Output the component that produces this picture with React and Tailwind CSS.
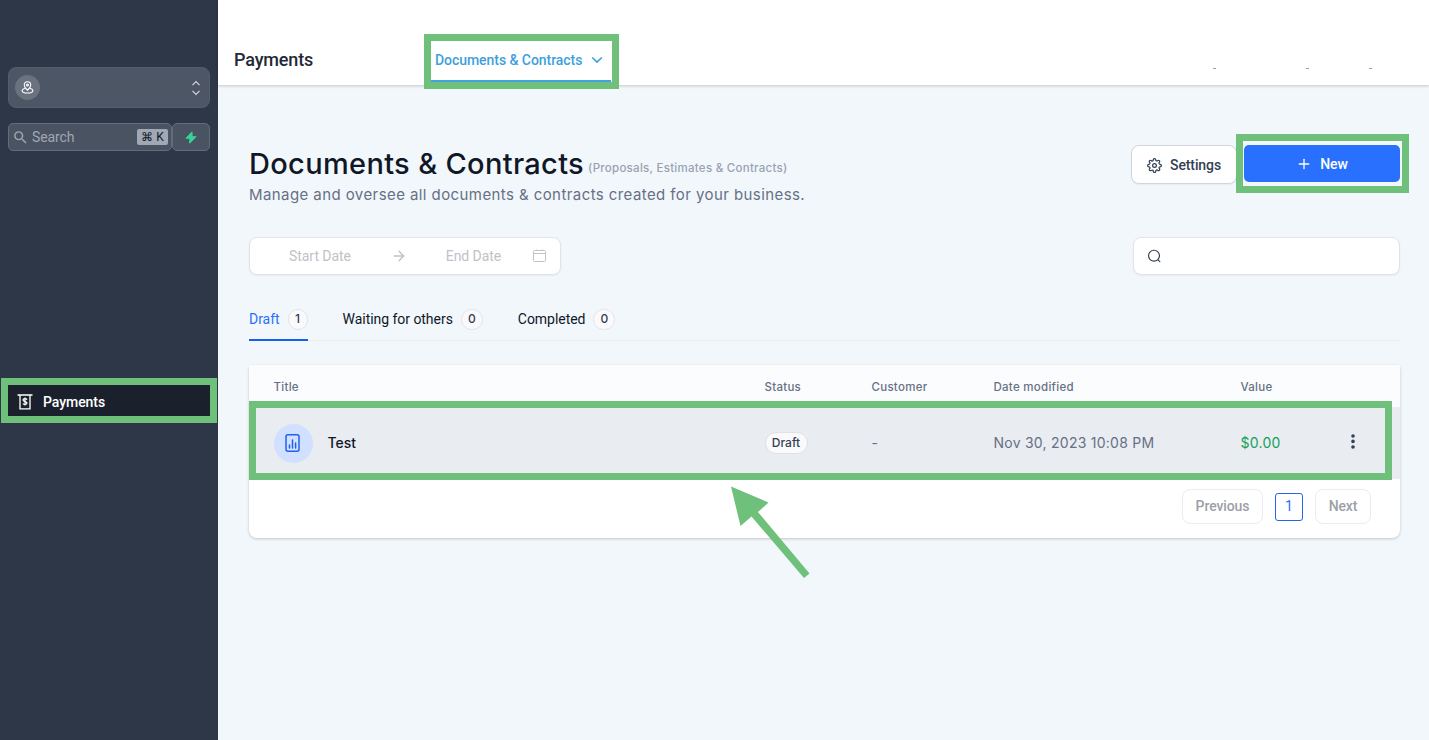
import React, { useState } from 'react';
import { MdSearch } from 'react-icons/md';
import { FiArrowRight, FiPlus, FiSettings } from 'react-icons/fi';

const tabs = [
    { label: 'Draft', count: 1, badge: 'w-[20px]' },
    { label: 'Waiting for others', count: 0, badge: 'w-[22px]' },
    { label: 'Completed', count: 0, badge: 'w-[22px]' },
];

const documents = [
    { title: 'Test', status: 'Draft', customer: '-', modified: 'Nov 30, 2023 10:08 PM', value: '$0.00' },
];

const columns = 'grid grid-cols-[491px_107px_122px_247px_1fr] items-center pl-[24.5px]';

const Highlight = ({ className }) => (
    <div className={`absolute pointer-events-none border-[#6fc07b] ${className}`} />
);

const LocationIcon = () => (
    <svg width="13" height="13" viewBox="0 0 24 24" fill="none" stroke="white" strokeWidth="2" strokeLinecap="round" strokeLinejoin="round">
        <path d="M12 17s6-4.6 6-9.5a6 6 0 0 0-12 0C6 12.400 12 17 12 17Z" />
        <circle cx="12" cy="7.500" r="1.800" />
        <path d="M6.500 14C3.600 14.700 2 16 2 17.800 2 20.300 6.500 22 12 22s10-1.700 10-4.200c0-1.800-1.600-3.100-4.500-3.800" />
    </svg>
);

const ReceiptIcon = () => (
    <svg width="16" height="16" viewBox="0 0 16 16" fill="none" stroke="white" strokeWidth="1.300">
        <path d="M.5 1h15M3 1v13.900h10V1" />
        <path d="M10 5.600C9.600 4.900 8.900 4.700 8 4.700c-1.200 0-2 .5-2 1.400 0 2 4 .9 4 3 0 .9-.8 1.400-2 1.400-.9 0-1.700-.3-2.100-1M8 3.600v8" strokeWidth="1.200" />
    </svg>
);

const ChartFileIcon = () => (
    <svg width="16" height="20" viewBox="0 0 16 20" fill="none" stroke="#1e62f0" strokeWidth="1.500" strokeLinecap="round">
        <rect x="1" y="1.700" width="13" height="16.500" rx="2" />
        <path d="M4.500 12v3M7.500 7V15M10.600 10V15" />
    </svg>
);

const SearchIcon = () => (
    <svg width="16" height="16" viewBox="0 0 16 16" fill="none" stroke="#344054" strokeWidth="1.300" strokeLinecap="round">
        <circle cx="7.700" cy="7.700" r="6" />
        <path d="m12.200 12.200 1.900 1.900" />
    </svg>
);

const Sidebar = () => (
    <aside className="w-[218px] shrink-0 bg-[#2e3748] px-2 font-['Roboto',sans-serif]">
        <button className="mt-[67px] flex h-[41px] w-[202px] items-center justify-between rounded-lg border border-[#535d6b] bg-[#4d5664] pl-1.5 pr-[8px]">
            <span className="flex h-[25px] w-[25px] items-center justify-center rounded-full bg-[#6a7280]">
                <LocationIcon />
            </span>
            <svg width="10" height="16" viewBox="0 0 10 16" fill="none" stroke="#d3d7dc" strokeWidth="1.200">
                <path d="M1.500 5.200 5 1.500l3.500 3.700M1.500 10.800 5 14.500l3.500-3.700" />
            </svg>
        </button>

        <div className="mt-[15px] flex h-7 w-[202px]">
            <div className="flex w-[164px] items-center rounded-[5px] border border-[#636c7a] bg-[#4a5362] pl-[3px] pr-[3px]">
                <MdSearch className="text-[17px] text-[#a0a7b2]" />
                <span className="ml-[3px] flex-1 text-[14px] tracking-[-0.1px] text-[#a0a7b2]">Search</span>
                <span className="flex h-4 w-[31px] items-center justify-center rounded-[2px] bg-[#a0a7b5] text-[12px] tracking-[0.3px] text-[#111827]">⌘ K</span>
            </div>
            <button className="flex w-[38px] items-center justify-center rounded-[5px] border border-[#636c7a] bg-[#4a5362]">
                <svg width="12" height="13" viewBox="0 0 12 13" fill="#36d399">
                    <path d="M7 .8 1 7.300h3.800L4.700 12.200 11 5.700H7.100Z" stroke="#36d399" strokeLinejoin="round" />
                </svg>
            </button>
        </div>

        <a className="relative mt-[234px] flex h-[31px] items-center bg-[#1a202c] pl-[9px] pt-[2px] text-[14px] font-medium tracking-[-0.05px] text-white">
            <ReceiptIcon />
            <span className="ml-[10px] pt-[2px]">Payments</span>
            <Highlight className="-left-[7px] -right-[7px] -top-[7px] -bottom-[7px] border-[7px]" />
        </a>
    </aside>
);

const Header = () => (
    <header className="relative flex h-[85px] items-start bg-white pl-4 font-['Roboto',sans-serif] shadow-[0_1px_3px_rgba(0,0,0,0.2)]">
        <h1 className="mt-[46px] w-[197px] text-[18px] font-medium leading-[27px] tracking-[-0.15px] text-[#1f2937]">Payments</h1>
        <button className="relative mt-[40px] flex h-[42px] w-[180px] items-center whitespace-nowrap border-b-2 border-[#3fa3e0] pl-1 text-[14px] font-medium tracking-[-0.05px] text-[#3fa0dc]">
            <span className="w-[156px] text-left">Documents &amp; Contracts</span>
            <svg width="12" height="8" viewBox="0 0 12 8" fill="none" stroke="#3fa0dc" strokeWidth="1.700">
                <path d="m1.200 1.500 4.800 4.500 4.800-4.500" />
            </svg>
            <Highlight className="-left-[7px] -right-[8px] -top-[6px] -bottom-[9px] border-[7px]" />
        </button>
        <div className="ml-auto mr-[57px] mt-[68px] flex">
            <span className="mr-[90px] h-px w-[3px] bg-gray-400" />
            <span className="mr-[60px] h-px w-[3px] bg-gray-400" />
            <span className="h-px w-[3px] bg-gray-400" />
        </div>
    </header>
);

const PageTitle = () => (
    <div className="flex h-[61px] items-start">
        <div>
            <div className="flex h-[38px] items-baseline">
                <h2 className="text-[29px] font-medium leading-[38px] tracking-[0.33px] text-[#101828]">Documents &amp; Contracts</h2>
                <span className="ml-1 -translate-y-[2px] text-[11.5px] font-medium leading-4 tracking-[0.27px] text-[#98a2b3]">(Proposals, Estimates &amp; Contracts)</span>
            </div>
            <p className="text-[15px] leading-6 tracking-[0.42px] text-[#667085]">
                Manage and oversee all documents &amp; contracts created for your business.
            </p>
        </div>
        <button className="ml-auto flex h-[39px] w-[106px] items-center rounded-lg border border-[#d0d5dd] bg-white pl-[15px] pt-px font-['Roboto',sans-serif] text-[14px] font-medium tracking-[-0.1px] text-[#344054] shadow-xs">
            <FiSettings className="text-[15px]" />
            <span className="ml-[8px]">Settings</span>
        </button>
        <button className="relative ml-[7px] flex h-[37px] w-[156px] items-center justify-center rounded-[5px] bg-[#2970ff] pt-px font-['Roboto',sans-serif] text-[14px] font-medium tracking-[-0.1px] text-white">
            <FiPlus className="text-[16px]" />
            <span className="ml-[8px]">New</span>
            <Highlight className="-left-[8px] -right-[9px] -top-[11px] -bottom-[11px] border-[7px]" />
        </button>
    </div>
);

const Filters = () => {
    const [query, setQuery] = useState('');

    return (
        <div className="mt-[31px] flex justify-between">
            <div className="flex h-[38px] w-[312px] items-center rounded-lg border border-[#e1e3ea] bg-white px-[13px] font-['Roboto',sans-serif] text-[14px] tracking-[-0.05px] text-[#c0c2c6] shadow-xs">
                <span className="w-[114px] text-center">Start Date</span>
                <FiArrowRight className="mx-[14px] text-[16px]" />
                <span className="w-[105px] text-center">End Date</span>
                <svg className="ml-auto" width="14" height="14" viewBox="0 0 14 14" fill="none" stroke="#c0c2c6">
                    <rect x=".5" y="1.500" width="12" height="11" rx="1" />
                    <path d="M.5 4.500h12M3.500 .5v1M9.500 .5v1" />
                </svg>
            </div>
            <label className="flex h-[38px] w-[267px] items-center rounded-lg border border-[#e1e3ea] bg-white pl-[13px] shadow-xs">
                <SearchIcon />
                <input
                    className="ml-2 w-full text-[14px] outline-none"
                    value={query}
                    onChange={(e) => setQuery(e.target.value)}
                />
            </label>
        </div>
    );
};

const Tabs = ({ active, onSelect }) => (
    <nav className="mt-[32px] flex h-[34px] items-start gap-[35px] border-b border-[#eaecf0] font-['Roboto',sans-serif] text-[14px] tracking-[-0.04px] text-[#101828]">
        {tabs.map((tab) => (
            <button
                key={tab.label}
                onClick={() => onSelect(tab.label)}
                className={`flex h-[34px] items-start ${active === tab.label ? 'border-b-2 border-[#155eef] text-[#2970ff]' : ''}`}
            >
                <span className="leading-[25px]">{tab.label}</span>
                <span className={`ml-2 mt-[2px] flex h-[21px] items-center justify-center rounded-full border border-[#e4e3ea] bg-[#fafafc] pb-px font-['Inter',sans-serif] text-[12px] font-medium tracking-normal text-[#344054] ${tab.badge}`}>
                    {tab.count}
                </span>
            </button>
        ))}
    </nav>
);

const DocumentsTable = () => (
    <section className="mt-[24px] h-[173px] rounded-lg rounded-t-sm bg-white shadow-[0_1px_3px_rgba(16,24,40,0.22)]">
        <div className={`${columns} h-[42px] bg-[#fbfcfe] pt-[3px] text-[11.5px] font-medium tracking-[0.27px] text-[#667085]`}>
            <span>Title</span>
            <span>Status</span>
            <span>Customer</span>
            <span>Date modified</span>
            <span>Value</span>
        </div>
        {documents.map((doc) => (
            <div key={doc.title} className={`${columns} relative h-[72px] bg-[#e9ecf1] text-[14px] tracking-[0.25px] text-[#667085]`}>
                <div className="flex items-center">
                    <span className="flex h-[39px] w-[39px] items-center justify-center rounded-full bg-[#d1e0ff]">
                        <ChartFileIcon />
                    </span>
                    <span className="ml-[15px] pb-[2px] font-medium tracking-normal text-[#101828]">{doc.title}</span>
                </div>
                <span className="flex h-[22px] w-[43px] items-center justify-center rounded-full border border-[#e0e0e8] bg-[#fafafc] text-[12px] font-medium tracking-normal text-[#344054]">
                    {doc.status}
                </span>
                <span className="pb-[2px]">{doc.customer}</span>
                <span className="pb-[2px]">{doc.modified}</span>
                <div className="flex items-center pb-[2px] text-[#16a05a]">
                    <span>{doc.value}</span>
                    <svg className="ml-auto mr-[45px]" width="4" height="16" viewBox="0 0 4 16" fill="#344054">
                        <circle cx="2" cy="2" r="1.800" />
                        <circle cx="2" cy="7.400" r="1.800" />
                        <circle cx="2" cy="13" r="1.800" />
                    </svg>
                </div>
                <Highlight className="left-0 right-[8px] -top-[6px] -bottom-[1px] border-[7px]" />
            </div>
        ))}
        <div className="mt-[10px] flex items-center justify-end pr-[29px] font-['Roboto',sans-serif] text-[14px] font-medium tracking-[-0.1px]">
            <button className="h-[35px] w-[81px] rounded-lg border border-[#eaecf0] text-[#9c9fa8]">Previous</button>
            <button className="mx-[12px] h-7 w-7 rounded-[3px] border border-[#2563eb] font-normal text-[#2970ff]">1</button>
            <button className="h-[35px] w-[56px] rounded-lg border border-[#eaecf0] text-[#9c9fa8]">Next</button>
        </div>
    </section>
);

const App = () => {
    const [activeTab, setActiveTab] = useState('Draft');

    return (
        <div className="relative flex h-screen overflow-hidden bg-[#f2f7fb] font-['Inter',sans-serif]">
            <Sidebar />
            <main className="flex-1">
                <Header />
                <div className="pl-[31px] pr-[29px] pt-[60px]">
                    <PageTitle />
                    <Filters />
                    <Tabs active={activeTab} onSelect={setActiveTab} />
                    <DocumentsTable />
                </div>
            </main>
            {/* arrow pointing at the document row */}
            <svg className="absolute left-[730px] top-[485px]" width="82" height="96" viewBox="0 0 82 96" fill="#6fc07b">
                <path d="M1 1.500 38.500 17.500 28 27l51.500 61.500-5.500 4.500L21.500 31.500 10.500 41Z" />
            </svg>
        </div>
    );
};

export default App;
